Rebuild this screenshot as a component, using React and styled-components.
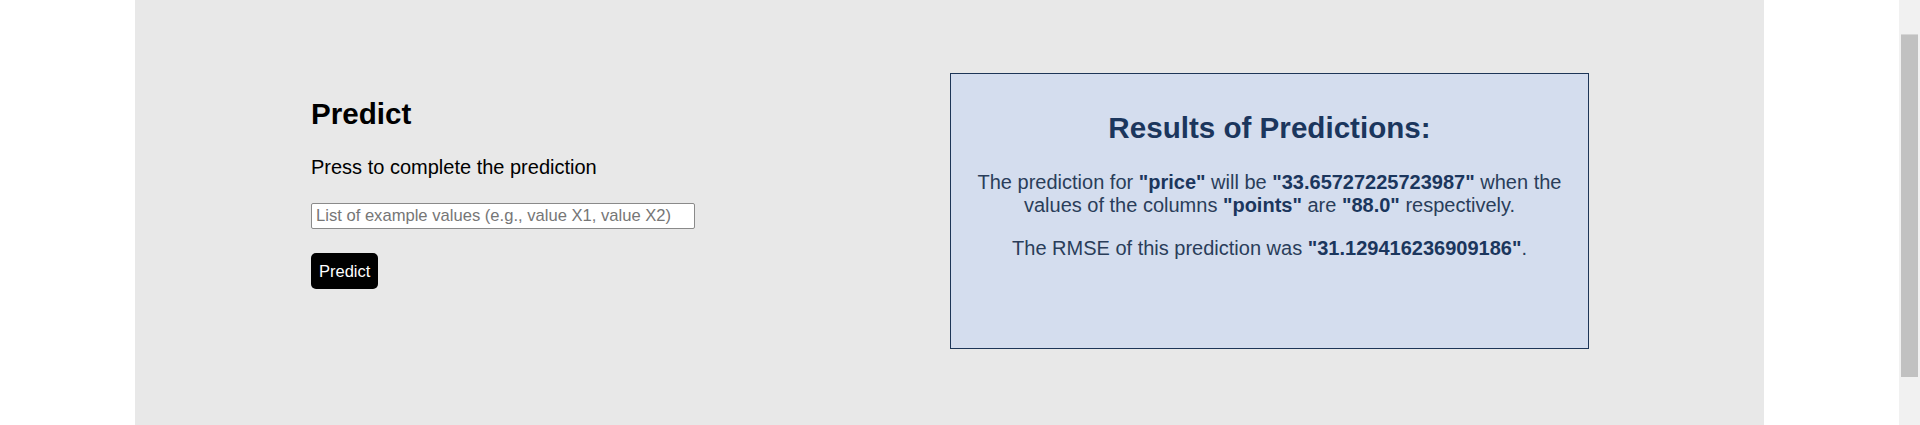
import styled, { createGlobalStyle } from "styled-components";

const GlobalStyle = createGlobalStyle`
  html, body {
    margin: 0;
    padding: 0;
    background: #ffffff;
    font-family: "Liberation Sans", Arial, sans-serif;
  }
`;

const Page = styled.div`
  display: flex;
  height: 425px;
  overflow: hidden;
`;

const Viewport = styled.div`
  flex: 1;
  padding: 0 135px;
`;

// the window's scroll bar, as it shows in the screenshot
const ScrollTrack = styled.div`
  width: 21px;
  flex-shrink: 0;
  box-sizing: border-box;
  background: #f1f1f1;
  padding: 34px 2px 48px;
  display: flex;
`;

const ScrollThumb = styled.div`
  flex: 1;
  background: #c1c1c1;
  border-top: 1px solid #d6d6d6;
`;

const Panel = styled.main`
  width: 1629px;
  height: 426px;
  box-sizing: border-box;
  background-color: #e8e8e8;
  padding: 73px 175px 0 176px;
  display: grid;
  grid-template-columns: 639px 639px;
  align-items: start;
`;

const Form = styled.section`
  display: flex;
  flex-direction: column;
  align-items: flex-start;
  padding-top: 24px;
`;

const Heading = styled.h1`
  margin: 0;
  font-size: 29.6px;
  font-weight: bold;
  color: #000;
`;

const Hint = styled.p`
  margin: 25px 0 0;
  font-size: 20px;
  color: #000;
`;

const ValuesInput = styled.input`
  margin-top: 24px;
  width: 384px;
  height: 26px;
  box-sizing: border-box;
  padding: 2px 4px;
  border: 1px solid #8a8a8a;
  border-radius: 2px;
  background: #fff;
  font-family: "Liberation Sans", Arial, sans-serif;
  font-size: 16.6px;

  &::placeholder {
    color: #767676;
  }
`;

const Button = styled.button`
  margin-top: 24px;
  height: 36px;
  padding: 0 8px;
  border: none;
  border-radius: 5px;
  background: #000;
  color: #fff;
  font-family: "Liberation Sans", Arial, sans-serif;
  font-size: 16.5px;
  cursor: pointer;
`;

const Results = styled.section`
  height: 276px;
  box-sizing: border-box;
  border: 1px solid #1d3557;
  background-color: #d4ddee;
  padding: 12px 20px;
  text-align: center;
  color: #2a3d5a;
`;

const ResultsTitle = styled.h2`
  margin: 25px 0 26px;
  font-size: 29.6px;
  font-weight: bold;
  color: #1b365d;
`;

const Line = styled.p`
  margin: 20px 0;
  font-size: 20px;

  b {
    color: #1b365d;
  }
`;

export default function App() {
  return (
    <>
      <GlobalStyle />
      <Page>
        <Viewport>
          <Panel>
            <Form>
              <Heading>Predict</Heading>
              <Hint>Press to complete the prediction</Hint>
              <ValuesInput placeholder="List of example values (e.g., value X1, value X2)" />
              <Button>Predict</Button>
            </Form>
            <Results>
              <ResultsTitle>Results of Predictions:</ResultsTitle>
              <Line>
                The prediction for <b>"price"</b> will be <b>"33.65727225723987"</b> when the
                values of the columns <b>"points"</b> are <b>"88.0"</b> respectively.
              </Line>
              <Line>
                The RMSE of this prediction was <b>"31.129416236909186"</b>.
              </Line>
            </Results>
          </Panel>
        </Viewport>
        <ScrollTrack>
          <ScrollThumb />
        </ScrollTrack>
      </Page>
    </>
  );
}
